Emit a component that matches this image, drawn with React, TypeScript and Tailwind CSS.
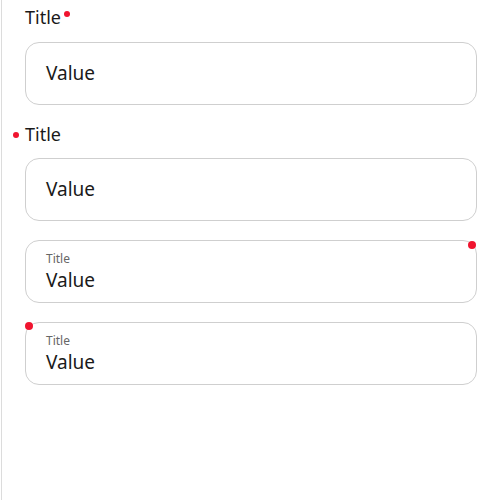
import React from 'react';

const font = { fontFamily: '"Noto Sans", "Open Sans", sans-serif' };

function Dot({ className = '' }: { className?: string }) {
  return <span className={`absolute rounded-full bg-[#f0142f] ${className}`} />;
}

export default function App() {
  return (
    <div className="w-[500px] h-[500px] bg-white" style={font}>
      <div className="ml-px h-full border-l border-[#dcdcdc] pl-[23px] pr-[23px] pt-[5px]">
        {/* title with dot after */}
        <div className="relative inline-block text-[18px] leading-[24px] text-[#1a1a1a]">
          Title
          <Dot className="w-[6px] h-[6px] -right-[9px] top-[6px]" />
        </div>
        <div className="mt-[12px] h-[63px] rounded-[14px] border border-[#cfcfcf] flex items-center pl-5 text-[19px] text-[#1a1a1a]">
          Value
        </div>

        {/* title with dot before */}
        <div className="relative inline-block mt-[17px] text-[18px] leading-[24px] text-[#1a1a1a]">
          Title
          <Dot className="w-[6px] h-[6px] -left-[12px] top-[10px]" />
        </div>
        <div className="mt-[11px] h-[63px] rounded-[14px] border border-[#cfcfcf] flex items-center pl-5 text-[19px] text-[#1a1a1a]">
          Value
        </div>

        {/* floating label, dot top-right */}
        <div className="relative mt-[19px] h-[63px] rounded-[14px] border border-[#cfcfcf] pl-5 pt-[10px]">
          <div className="text-[12px] leading-[16px] text-[#666]">Title</div>
          <div className="text-[19px] leading-[26px] text-[#1a1a1a]">Value</div>
          <Dot className="w-2 h-2 right-0 top-0" />
        </div>

        {/* floating label, dot top-left */}
        <div className="relative mt-[19px] h-[63px] rounded-[14px] border border-[#cfcfcf] pl-5 pt-[10px]">
          <div className="text-[12px] leading-[16px] text-[#666]">Title</div>
          <div className="text-[19px] leading-[26px] text-[#1a1a1a]">Value</div>
          <Dot className="w-2 h-2 -left-px -top-px" />
        </div>
      </div>
    </div>
  );
}
